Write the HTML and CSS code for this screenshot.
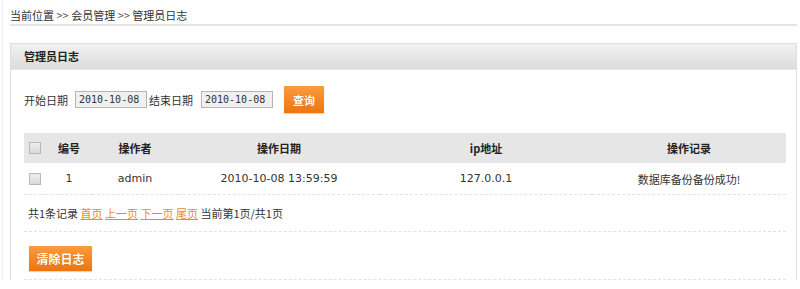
FILE: index.html
```html
<!DOCTYPE html>
<html lang="zh-CN">
<head>
    <meta charset="UTF-8">
    <title>管理员日志</title>
    <link rel="stylesheet" href="styles.css">
</head>
<body>

    <!-- Breadcrumb -->
    <div class="crumb">当前位置 <span class="sep">&gt;&gt;</span> 会员管理 <span class="sep">&gt;&gt;</span> 管理员日志</div>

    <div class="panel">
        <div class="panel-title">管理员日志</div>

        <div class="panel-body">
            <!-- Search -->
            <div class="search">
                <span class="label">开始日期</span>
                <input type="text" class="date-input" value="2010-10-08">
                <span class="label end">结束日期</span>
                <input type="text" class="date-input" value="2010-10-08">
                <button class="btn btn-query">查询</button>
            </div>

            <!-- Log table -->
            <table class="log-table">
                <colgroup>
                    <col style="width: 22px">
                    <col style="width: 46px">
                    <col style="width: 86px">
                    <col style="width: 202px">
                    <col style="width: 212px">
                    <col>
                </colgroup>
                <thead>
                    <tr>
                        <th><input type="checkbox" class="check"></th>
                        <th>编号</th>
                        <th>操作者</th>
                        <th>操作日期</th>
                        <th>ip地址</th>
                        <th>操作记录</th>
                    </tr>
                </thead>
                <tbody>
                    <tr>
                        <td><input type="checkbox" class="check"></td>
                        <td>1</td>
                        <td>admin</td>
                        <td>2010-10-08 13:59:59</td>
                        <td>127.0.0.1</td>
                        <td>数据库备份备份成功!</td>
                    </tr>
                </tbody>
            </table>

            <!-- Pager -->
            <div class="pager">
                共1条记录
                <a href="#">首页</a>
                <a href="#">上一页</a>
                <a href="#">下一页</a>
                <a href="#">尾页</a>
                当前第1页/共1页
            </div>

            <div class="actions">
                <button class="btn btn-clear">清除日志</button>
            </div>
        </div>
    </div>

</body>
</html>
```

FILE: styles.css
```css
/* General */
body {
    margin: 0;
    padding: 0;
    background: #fff;
    color: #333;
    font-family: "DejaVu Sans", "Noto Sans CJK SC", sans-serif;
    font-size: 11px;
    border-left: 1px solid #f0f0f0;
    margin-left: 2px;
}

/* Breadcrumb */
.crumb {
    margin: 0 3px 0 7px;
    padding-top: 8px;
    height: 16px;
    line-height: 14px;
    border-bottom: 2px solid #e4e4e4;
    font-family: "Noto Sans CJK SC", sans-serif;
}

.crumb .sep {
    color: #555;
}

/* Panel */
.panel {
    margin: 17px 3px 0 7px;
    border: 1px solid #dedede;
    border-bottom: none;
}

.panel-title {
    height: 25px;
    line-height: 25px;
    padding-left: 13px;
    font-weight: bold;
    font-family: "Noto Sans CJK SC", sans-serif;
    color: #222;
    background: linear-gradient(#f1f1f1, #dcdcdc);
    border-bottom: 1px solid #e6e6e6;
}

.panel-body {
    padding: 0 10px 0 13px;
}

/* Search */
.search {
    display: flex;
    align-items: center;
    height: 27px;
    margin-top: 16px;
}

.label {
    font-family: "Noto Sans CJK SC", sans-serif;
    margin-right: 7px;
}

.label.end {
    margin-left: 2px;
    margin-right: 8px;
}

.date-input {
    width: 64px;
    height: 15px;
    padding: 0 3px;
    margin: 0;
    border: 1px solid #b5b5b5;
    background: #f0f0f0;
    font-family: "DejaVu Sans Mono", monospace;
    font-size: 10px;
    color: #333;
}

/* Buttons */
.btn {
    border: none;
    color: #fff;
    font-weight: bold;
    font-family: "Noto Sans CJK SC", sans-serif;
    cursor: pointer;
    background: linear-gradient(#fb9c3c, #ee7410);
    box-shadow: 0 1px 1px rgba(0, 0, 0, 0.15);
    text-shadow: 0 0 1px rgba(160, 70, 0, 0.5);
    padding: 0;
}

.btn-query {
    width: 40px;
    height: 27px;
    margin-left: 11px;
    font-size: 11px;
}

.btn-clear {
    width: 63px;
    height: 25px;
    margin-left: 5px;
    font-size: 12px;
}

/* Table */
.log-table {
    width: 100%;
    margin-top: 20px;
    border-collapse: collapse;
    table-layout: fixed;
}

.log-table th {
    height: 30px;
    background: #e6e6e6;
    font-weight: bold;
    font-family: "Noto Sans CJK SC", sans-serif;
    color: #222;
    text-align: center;
    padding: 0;
}

.log-table td {
    height: 31px;
    text-align: center;
    padding: 0;
    border-bottom: 1px dashed #e2e2e2;
}

.log-table td:last-child {
    font-family: "Noto Sans CJK SC", sans-serif;
}

.check {
    appearance: none;
    width: 12px;
    height: 12px;
    margin: 0 0 0 5px;
    display: block;
    border: 1px solid #b8b8b8;
    background: linear-gradient(#eee, #d8d8d8);
}

/* Pager */
.pager {
    height: 36px;
    line-height: 36px;
    padding-left: 4px;
    border-bottom: 1px dashed #e2e2e2;
    font-family: "Noto Sans CJK SC", sans-serif;
}

.pager a {
    color: #f08a1c;
}

.actions {
    padding: 14px 0 8px;
    border-bottom: 1px dashed #e2e2e2;
}
```
